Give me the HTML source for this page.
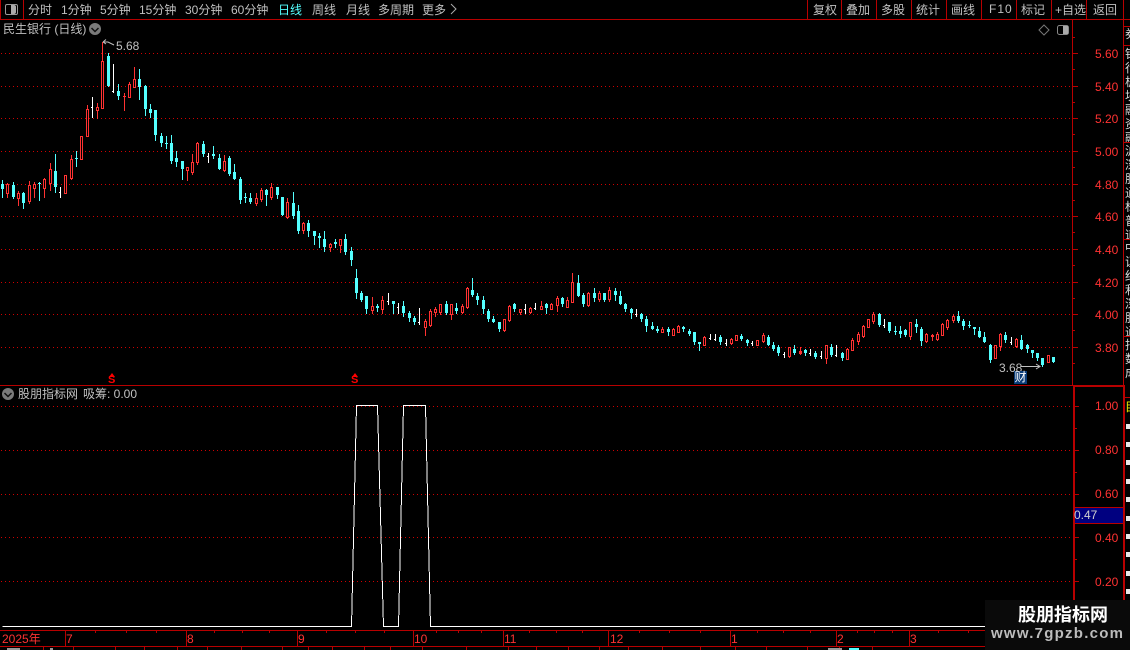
<!DOCTYPE html>
<html lang="zh"><head><meta charset="utf-8"><title>股朋指标网</title>
<style>
html,body{margin:0;padding:0;background:#000;}
#p{position:relative;width:1130px;height:650px;background:#000;overflow:hidden;font-family:"Liberation Sans","WenQuanYi Zen Hei","Noto Sans CJK SC",sans-serif;font-size:12px;color:#c0c0c0;}
#p span,#p div{position:absolute;white-space:nowrap;}
.t{line-height:16px;height:16px;}
.r{color:#ff3232;}
.ln{background:#b80000;}
svg{position:absolute;left:0;top:0;}
.col{left:1125px;width:5px;overflow:hidden;color:#d8d8d8;line-height:14px;white-space:normal!important;}
.col b{display:block;width:12px;font-weight:normal;}
</style></head><body><div id="p">
<svg id="s" width="1130" height="650" shape-rendering="crispEdges"></svg>

<div class="ln" style="left:0;top:19px;width:1130px;height:1px"></div>
<div class="ln" style="left:23px;top:0;width:1px;height:19px"></div>
<div class="ln" style="left:0;top:0;width:1px;height:19px"></div>
<div style="left:5px;top:4px;width:11px;height:9px;border:1px solid #999;border-radius:2px;background:#000"></div>
<div style="left:11px;top:5px;width:5px;height:9px;background:#aaa;border-radius:0 2px 2px 0"></div>

<span class="t" style="left:28px;top:2px">分时</span>
<span class="t" style="left:61px;top:2px">1分钟</span>
<span class="t" style="left:100px;top:2px">5分钟</span>
<span class="t" style="left:139px;top:2px">15分钟</span>
<span class="t" style="left:185px;top:2px">30分钟</span>
<span class="t" style="left:231px;top:2px">60分钟</span>
<span class="t" style="left:278px;top:2px;color:#54ffff">日线</span>
<span class="t" style="left:312px;top:2px">周线</span>
<span class="t" style="left:346px;top:2px">月线</span>
<span class="t" style="left:378px;top:2px">多周期</span>
<span class="t" style="left:422px;top:2px">更多</span>
<svg width="1130" height="650" style="pointer-events:none">
<path d="M451 4L456 9L451 14" fill="none" stroke="#aaa"/>
<circle cx="95" cy="29" r="6" fill="#7a7a7a"/><path d="M91.500 28L95 31.500L98.500 28" fill="none" stroke="#111" stroke-width="1.500"/>
<circle cx="8" cy="394" r="6" fill="#7a7a7a"/><path d="M4.500 393L8 396.500L11.500 393" fill="none" stroke="#111" stroke-width="1.500"/>
<path d="M1044 25L1049 30L1044 35L1039 30Z" fill="none" stroke="#777"/>
<rect x="1057.500" y="25.500" width="11" height="9" rx="2" fill="#000" stroke="#888"/><rect x="1063" y="26" width="5" height="8" fill="#aaa"/>
<path d="M103 42L106 39.500M103 42L106 44M103 42H108L114 45" fill="none" stroke="#c0c0c0"/>
<path d="M1021 366.500H1040M1036 364L1040 366.500L1036 369" fill="none" stroke="#c0c0c0"/>
<path d="M112 373L115 377H109Z" fill="#f00"/><path d="M355 373L358 377H352Z" fill="#f00"/>
</svg>
<span class="t" style="left:3px;top:21px">民生银行 (日线)</span>
<span class="t" style="left:116px;top:38px">5.68</span>
<span class="t" style="left:999px;top:360px">3.68</span>
<span class="t" style="left:1014px;top:371px;width:13px;height:13px;line-height:13px;background:#0b3c78;color:#fff;text-align:center">财</span>
<span style="left:108px;top:376px;font:bold 11px/9px 'Liberation Sans',sans-serif;color:#f00">S</span>
<span style="left:351px;top:376px;font:bold 11px/9px 'Liberation Sans',sans-serif;color:#f00">S</span>
<span class="t" style="left:18px;top:386px">股朋指标网</span>
<span class="t" style="left:83px;top:386px">吸筹: 0.00</span>

<!-- right toolbar -->
<div class="ln" style="left:807px;top:0;width:1px;height:19px"></div>
<div class="ln" style="left:841px;top:0;width:1px;height:19px"></div>
<div class="ln" style="left:876px;top:0;width:1px;height:19px"></div>
<div class="ln" style="left:911px;top:0;width:1px;height:19px"></div>
<div class="ln" style="left:946px;top:0;width:1px;height:19px"></div>
<div class="ln" style="left:981px;top:0;width:1px;height:19px"></div>
<div class="ln" style="left:1016px;top:0;width:1px;height:19px"></div>
<div class="ln" style="left:1051px;top:0;width:1px;height:19px"></div>
<div class="ln" style="left:1086px;top:0;width:1px;height:19px"></div>
<div class="ln" style="left:1123px;top:0;width:1px;height:19px"></div>
<span class="t" style="left:813px;top:2px">复权</span>
<span class="t" style="left:846px;top:2px">叠加</span>
<span class="t" style="left:881px;top:2px">多股</span>
<span class="t" style="left:916px;top:2px">统计</span>
<span class="t" style="left:951px;top:2px">画线</span>
<span class="t" style="left:989px;top:1px;letter-spacing:1px">F10</span>
<span class="t" style="left:1021px;top:2px">标记</span>
<span class="t" style="left:1055px;top:2px">+自选</span>
<span class="t" style="left:1093px;top:2px">返回</span>

<!-- axis frame -->
<div class="ln" style="left:1072px;top:20px;width:1px;height:366px"></div>
<div class="ln" style="left:1073px;top:387px;width:2px;height:213px"></div>
<div class="ln" style="left:1123px;top:19px;width:1px;height:367px"></div>
<div class="ln" style="left:1123px;top:387px;width:2px;height:213px"></div>
<div class="ln" style="left:0;top:385px;width:1125px;height:1px"></div>
<div class="ln" style="left:1073px;top:386px;width:52px;height:1px"></div>
<div class="ln" style="left:1123px;top:26px;width:7px;height:1px"></div>
<div class="ln" style="left:1123px;top:45px;width:7px;height:1px"></div>
<div class="ln" style="left:1123px;top:142px;width:7px;height:1px"></div>
<div class="ln" style="left:1123px;top:239px;width:7px;height:1px"></div>
<div class="ln" style="left:1123px;top:336px;width:7px;height:1px"></div>
<div class="ln" style="left:1125px;top:397px;width:5px;height:1px"></div>

<span class="t r" style="left:1095px;top:46px">5.60</span>
<span class="t r" style="left:1095px;top:79px">5.40</span>
<span class="t r" style="left:1095px;top:111px">5.20</span>
<span class="t r" style="left:1095px;top:144px">5.00</span>
<span class="t r" style="left:1095px;top:177px">4.80</span>
<span class="t r" style="left:1095px;top:209px">4.60</span>
<span class="t r" style="left:1095px;top:242px">4.40</span>
<span class="t r" style="left:1095px;top:275px">4.20</span>
<span class="t r" style="left:1095px;top:307px">4.00</span>
<span class="t r" style="left:1095px;top:340px">3.80</span>
<span class="t r" style="left:1095px;top:398px">1.00</span>
<span class="t r" style="left:1095px;top:442px">0.80</span>
<span class="t r" style="left:1095px;top:486px">0.60</span>
<span class="t r" style="left:1095px;top:530px">0.40</span>
<span class="t r" style="left:1095px;top:574px">0.20</span>

<div style="left:1075px;top:507px;width:48px;height:15px;background:#000080;border-top:1px solid #b80000;border-bottom:1px solid #b80000"></div>
<span class="t" style="left:1074px;top:507px;color:#d0d0d0">0.47</span>

<!-- right clipped column -->
<div class="col" style="top:27px;height:18px;">券</div>
<div class="col" style="top:47px;height:95px;"><b>银行板块</b><b>融资融券</b></div>
<div class="col" style="top:144px;height:95px;"><b>沪深股通</b><b>标普道琼</b></div>
<div class="col" style="top:241px;height:95px;"><b>中证红利</b><b>深股通斯</b></div>
<div class="col" style="top:338px;height:47px;"><b>指数成</b></div>
<div class="col" style="top:400px;height:18px;color:#e8e800;">目</div>

<!-- date axis -->
<div class="ln" style="left:0;top:630px;width:985px;height:1px"></div>
<div class="ln" style="left:0;top:646px;width:985px;height:1px"></div>
<span class="t r" style="left:2px;top:631px">2025年</span>
<span class="t r" style="left:66px;top:631px">7</span>
<span class="t r" style="left:187px;top:631px">8</span>
<span class="t r" style="left:298px;top:631px">9</span>
<span class="t r" style="left:414px;top:631px">10</span>
<span class="t r" style="left:504px;top:631px">11</span>
<span class="t r" style="left:610px;top:631px">12</span>
<span class="t r" style="left:731px;top:631px">1</span>
<span class="t r" style="left:837px;top:631px">2</span>
<span class="t r" style="left:910px;top:631px">3</span>

<!-- watermark -->
<div style="left:985px;top:600px;width:145px;height:50px;background:#0a0a0a"></div>
<span style="left:1018px;top:604px;font:bold 18px/22px 'Liberation Sans','Noto Sans CJK SC',sans-serif;color:#fff">股朋指标网</span>
<span style="left:991px;top:625px;font:bold 15px/18px 'Liberation Sans',sans-serif;color:#bdbdbd;letter-spacing:1.250px">www.7gpzb.com</span>

<script>
(function(){
var d="c540,552,567,590 r548,552,578,590 c546,555,590,594 r574,580,593,614 c575,580,608,623 r544,556,602,608 r545,553,563,590 c547,550,553,600 r535,538,563,590 r489,508,548,570 c462,514,560,575 w560,575,577,590 r525,526,578,578 r465,478,534,537 c453,473,477,498 r408,409,476,476 r316,328,407,407 w291,320,323,350 r309,322,329,354 r125,184,323,323 c160,168,258,258 w192,272,275,275 c252,273,288,298 f279,288,292,330 r247,253,290,290 r201,238,260,260 c207,237,260,296 c254,258,326,344 c312,327,339,350 c330,330,404,419 c400,408,429,437 c408,429,432,443 c405,429,483,490 c453,475,485,497 c484,484,507,537 r502,502,510,540 r462,487,515,521 r426,429,486,491 c423,432,462,468 w460,468,470,486 c438,462,468,473 c462,474,506,506 r465,484,510,513 c469,474,522,525 c492,516,537,537 c532,537,599,608 c578,592,594,607 c579,595,606,608 r579,595,610,615 r564,570,597,604 c566,570,585,614 r549,562,592,598 c561,561,586,595 c591,591,645,645 r594,606,650,654 c576,609,648,654 c615,633,693,699 r666,669,690,699 c660,669,693,708 c693,693,708,732 c699,708,714,741 c693,717,741,753 r729,732,741,753 c717,726,732,741 r717,717,735,756 c702,717,756,762 c741,753,780,795 c807,834,879,894 c873,879,900,903 c888,888,927,939 r891,918,931,939 c912,918,924,933 r888,900,927,939 w879,903,906,912 c903,903,912,939 w909,921,924,939 c903,918,939,948 c933,939,954,963 c948,954,966,972 w924,966,969,972 r957,963,981,1005 r928,933,975,978 r921,927,936,948 r912,912,936,942 c903,912,939,942 r912,912,942,957 c909,924,933,939 r912,918,936,939 r861,864,921,924 c834,870,885,888 c879,888,900,912 c888,900,927,939 c927,933,957,963 c948,957,966,966 c966,966,987,993 r957,957,990,993 r915,918,960,963 c909,912,927,933 r928,928,936,942 w912,927,930,939 r921,924,936,939 w909,924,927,927 r903,918,927,927 c909,912,924,939 r909,912,927,927 r888,894,915,933 c891,894,912,918 r891,900,921,921 r819,846,906,906 c825,849,888,888 c879,885,912,918 r876,879,915,918 c864,879,894,903 r873,879,897,903 c879,879,900,903 r861,870,897,903 c864,873,885,900 c873,888,912,912 c909,912,927,933 c924,927,939,954 w927,942,945,948 c939,942,957,963 c948,957,978,993 c966,978,987,987 c978,987,993,996 r981,987,996,996 c981,987,996,1005 r984,987,1005,1005 r975,978,996,996 c978,981,987,993 c987,993,1002,1005 c996,996,1026,1032 c1026,1026,1032,1050 r1008,1011,1035,1035 w1002,1014,1017,1017 w1002,1017,1020,1020 c1005,1011,1026,1032 w1017,1029,1032,1035 r1014,1017,1029,1032 r1005,1005,1020,1020 c1002,1008,1017,1020 c1017,1020,1029,1035 w1023,1029,1032,1035 r1020,1020,1035,1035 r999,1005,1023,1026 c1005,1011,1035,1035 c1026,1035,1047,1050 c1035,1041,1059,1065 w1056,1062,1065,1071 r1041,1041,1068,1071 c1035,1047,1059,1062 f1041,1053,1062,1062 c1047,1050,1059,1065 w1047,1059,1062,1065 c1053,1059,1071,1074 w1053,1068,1071,1074 r1035,1035,1074,1089 c1032,1041,1065,1068 w1035,1065,1068,1068 c1056,1059,1074,1080 r1044,1047,1077,1077 r1014,1020,1050,1050 r996,1002,1023,1032 r975,978,1008,1011 r957,957,981,981 r936,942,963,969 c939,942,975,978 w957,975,978,981 c966,966,993,996 c978,993,996,1002 c978,993,1002,1011 c987,990,1005,1008 r966,966,1008,1017 c957,972,981,996 c981,987,1023,1035 r999,1002,1023,1026 r1002,1005,1008,1020 r996,1002,1017,1020 r969,972,1005,1005 r957,960,981,987 r942,948,960,966 c933,948,963,966 c957,963,978,987 c963,975,978,981 c981,981,987,1002 c981,993,1011,1011 c996,1011,1026,1026 c1032,1035,1080,1086 r1035,1035,1074,1074 r999,1002,1038,1050 c996,1005,1020,1026 w1011,1026,1029,1032 r1014,1017,1038,1041 c1005,1020,1047,1047 c1032,1035,1047,1056 c1050,1050,1059,1071 c1059,1059,1074,1080 c1074,1074,1095,1098 r1065,1065,1086,1086 c1071,1071,1086,1086".split(" ");
var o=[];
function R(x,y,w,h,c){if(h<=0||w<=0)return;o.push('<rect x="'+x+'" y="'+y+'" width="'+w+'" height="'+h+'" fill="'+c+'"/>');}
var FR="#ff3232",CY="#54ffff";
// grid
var gy=[53,86,118,151,184,216,249,282,314,347,406,450,494,537,581];
gy.forEach(function(y){for(var x=1;x<1072;x+=4)o.push('<rect x="'+x+'" y="'+y+'" width="1" height="1" fill="#d00000"/>');});
// price ticks
[53,86,118,151,184,216,249,282,314,347].forEach(function(y,i){R(1073,y,5,1,"#b80000");R(1073,y+16,2,1,"#b80000");});
R(1073,37,2,1,"#b80000");
[406,450,494,537,581].forEach(function(y){R(1075,y,4,1,"#b80000");R(1075,y+22,2,1,"#b80000");});
// lower right clipped blocks
for(var k=0;k<10;k++)R(1126,424+k*18.4|0,4,5,"#e8e8e8");
// candles
d.forEach(function(s,i){
 var t=s[0],v=s.slice(1).split(",").map(function(n){return Math.round(+n/3)});
 var x=Math.floor(2.6+5.281*i),h=v[0],a=v[1],b=v[2],l=v[3];
 if(t=="c"){R(x,h,1,l-h+1,CY);R(x-1,a,3,Math.max(b-a,1),CY);}
 else if(t=="w"){R(x,h,1,l-h+1,"#fff");R(x-1,a,1,1,"#fff");}
 else if(t=="f"){R(x,h,1,l-h+1,FR);R(x-1,a,3,Math.max(b-a,1),FR);}
 else{R(x,h,1,l-h+1,FR);R(x-1,a,3,Math.max(b-a,1)+1,FR);if(b-a>1)R(x,a+1,1,b-a-1,"#000");}
});
// white indicator
o.push('<polyline points="2.5,626.5 351.5,626.5 356.5,405.5 377.5,405.5 383.5,626.5 398.5,626.5 403.5,405.5 425.5,405.5 430.5,626.5 985,626.5" fill="none" stroke="#fff" stroke-width="1"/>');
// date ticks
[65,186,297,413,503,608,730,836,909].forEach(function(x){R(x,630,1,16,"#b80000");});
[95,126,156,214,242,269,326,355,384,436,458,481,529,556,582,639,669,700,757,783,810,857,874,892,938,968].forEach(function(x){R(x,630,1,3,"#b80000");});
[43,73,115,144,177,207,241,282,308,332,364,390,422,466,508,536,568,599,628,662,700,735,766,807,839,872].forEach(function(x){R(x,647,1,3,"#b80000");});
R(7,648,13,2,"#999");R(50,648,3,2,"#999");R(828,648,14,2,"#999");R(849,648,10,2,"#54ffff");
document.getElementById("s").innerHTML=o.join("");
})();
</script>
</div></body></html>
